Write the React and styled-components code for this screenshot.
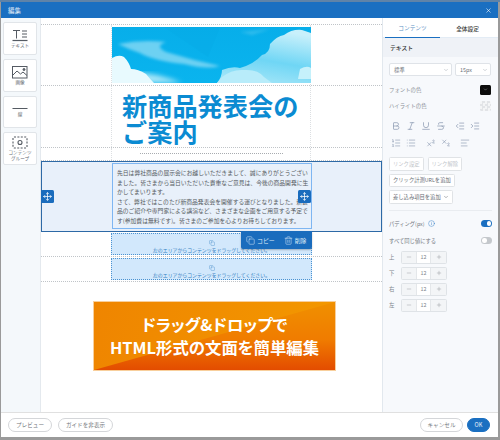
import React from "react";
import styled, { createGlobalStyle } from "styled-components";
import { X, ChevronDown, Bold, Italic, Underline, Strikethrough, Outdent, Indent, List, ListOrdered, Superscript, Subscript, AlignLeft, Copy, Trash2, Move, Minus, Plus, Info } from "lucide-react";

const Global = createGlobalStyle`
  html, body { margin: 0; padding: 0; width: 500px; height: 440px; overflow: hidden; background: #8f989f; }
  * { box-sizing: border-box; }
  #root { width: 500px; height: 440px; font-family: "Noto Sans CJK JP", "Noto Sans", sans-serif; }
`;

const Page = styled.div`
  width: 500px; height: 440px; padding: 2px 2px 3px 1px;
  background: linear-gradient(#5f83a8 0, #5f83a8 2px, #9a9a9a 2px);
`;
const Modal = styled.div`
  width: 497px; height: 435px; background: #fff; display: flex; flex-direction: column;
`;
const Header = styled.header`
  height: 16px; flex: none; background: #1a6fc1; color: #e4eef8; display: flex; align-items: center;
  justify-content: space-between; padding: 0 6px 0 7px; font-size: 6.4px;
`;
const Body = styled.div`flex: 1; min-height: 0; display: flex;`;
const Sidebar = styled.aside`
  width: 40px; flex: none; background: #f4f8fb; border-right: 1px solid #e4e9ee;
  padding: 4px 3px 0 2px; display: flex; flex-direction: column; gap: 4px;
`;
const Tool = styled.div`
  height: ${p => p.$h}px; background: #fff; border: 1px solid #e1e5e9; border-radius: 2px;
  display: flex; flex-direction: column; align-items: center; justify-content: center; gap: 1px;
  color: #666c74; font-size: 4.6px; line-height: 5.4px; text-align: center;
  svg { display: block; }
`;
const Canvas = styled.main`
  flex: 1; min-width: 0; position: relative; padding-top: 6px; background: #fff;
`;
const Row = styled.div`
  display: grid; grid-template-columns: 70px 200px 1fr;
  height: ${p => p.$h}px;
  border-top: ${p => (p.$top ? "1px dotted #c0c4c8" : "none")};
  border-bottom: 1px dotted #c0c4c8;
`;
const Side = styled.div``;
const Cell = styled.div`
  border-left: 1px dotted #dcdfe2; border-right: 1px dotted #dcdfe2; min-width: 0;
`;
const HeroCell = styled(Cell)`padding: 2px 0 2px 0;`;
const Title = styled.h1`
  margin: 0; padding: 6px 0 0 10px; font-size: 25.2px; line-height: 26px; font-weight: 700; color: #0b8bd2;
  letter-spacing: 0; white-space: nowrap;
`;
const RuleCell = styled(Cell)`display: flex; align-items: center; justify-content: center; padding: 0 0 2px 0;`;
const DotRule = styled.div`width: 143px; border-top: 1.5px dotted #a8acb0;`;
const SelectedRow = styled.div`
  position: relative; height: 71px; background: #e8f0fa; border: 1px solid #2d69a6;
  display: grid; grid-template-columns: 70px 200px 1fr; padding-top: 1px;
`;
const TextBox = styled.div`
  height: 66px; border: 1px solid #7eb6f2; padding: 4px 0 0 4px; overflow: hidden;
  font-size: 5.8px; line-height: 9.6px; color: #555a60; white-space: nowrap;
`;
const Handle = styled.div`
  position: absolute; top: 28px; left: ${p => p.$x}px; width: 13px; height: 13px; background: #1a6cbd;
  border-radius: 1.5px; display: flex; align-items: center; justify-content: center; color: #fff; z-index: 3;
`;
const Actions = styled.div`
  position: absolute; left: 199px; top: 69px; width: 71px; height: 18px; background: #1a6cbd; color: #dbe9f7;
  border-radius: 0 0 2px 2px; display: flex; align-items: center; padding-left: 5px; font-size: 5.9px; z-index: 4;
  box-shadow: 0 1px 2px rgba(0,0,0,.25);
`;
const ActionItem = styled.span`display: inline-flex; align-items: center; gap: 2px; margin-right: ${p => p.$mr || 0}px;`;
const ZoneRow = styled.div`
  display: grid; grid-template-columns: 70px 201px 1fr; height: 25px; border-bottom: 1px dotted #c0c4c8; padding-top: 1px;
`;
const Zone = styled.div`
  height: 22px; background: #d2e8fc; border: 1px dotted #4b93d2; color: #3481c3; font-size: 4.9px; line-height: 6px;
  display: flex; flex-direction: column; align-items: center; justify-content: flex-end; padding-bottom: 1px; gap: 1px; white-space: nowrap;
`;
const Banner = styled.div`
  position: relative; width: 243px; height: 70px; margin: 19px 0 0 52px; overflow: hidden;
  background: linear-gradient(100deg, #ef8500 0%, #f39800 100%); border: 1px solid #f8cf9c;
  color: #fff; display: flex; flex-direction: column; align-items: center; justify-content: center;
  font-size: 16.4px; line-height: 23px; font-weight: 700; font-feature-settings: "palt";
`;
const Wedge = styled.div`
  position: absolute; inset: 0; background: linear-gradient(#f09000 0%, #f07c00 55%, #e34c00 100%);
  clip-path: polygon(0 100%, 100% 0, 100% 100%);
`;
const BannerLine = styled.span`position: relative; white-space: nowrap;`;

const Panel = styled.aside`
  width: 116px; flex: none; background: #f7f9fc; border-left: 1px solid #e2e8ee; display: flex; flex-direction: column;
`;
const Tabs = styled.div`display: flex; height: 20px; padding: 0 3px 0 2px; background: #fff; border-bottom: 1px solid #e3ecf5;`;
const Tab = styled.div`
  flex: 1; display: flex; align-items: center; justify-content: center; font-size: 5.7px; height: 20px;
  color: ${p => (p.$active ? "#5c8fc4" : "#444")}; font-weight: ${p => (p.$active ? 400 : 500)};
  border-bottom: ${p => (p.$active ? "1.5px solid #1a6fc1" : "none")};
`;
const SectionHead = styled.div`
  height: 19px; background: #eff2f7; font-size: 5.8px; font-weight: 500; color: #333; display: flex; align-items: center; padding-left: 7px;
`;
const PanelBody = styled.div`padding: 6px 6px 0 6px; display: flex; flex-direction: column;`;
const Selects = styled.div`display: flex; gap: 3px;`;
const Select = styled.div`
  width: ${p => p.$w}px; height: 13px; background: #fff; border: 1px solid #dfe3e8; border-radius: 2px; color: #6a7078; font-size: 5.4px;
  display: flex; align-items: center; justify-content: space-between; padding: 0 2px 0 4px;
`;
const ColorRow = styled.div`
  display: flex; align-items: center; justify-content: space-between; height: 11px; margin-top: ${p => p.$mt}px; padding-right: 1px;
  font-size: 5.4px; color: #8b9097;
`;
const Swatch = styled.div`
  width: 11px; height: 10px; border-radius: 1.5px; background: #0c0c0c; color: #bbb; display: flex; align-items: center; justify-content: center;
`;
const EmptySwatch = styled.div`
  width: 11px; height: 10px; border-radius: 1.5px;
  background: repeating-conic-gradient(#e2e4e7 0 25%, #f4f5f6 0 50%) 0 0 / 5px 5px;
`;
const IconLine = styled.div`display: flex; align-items: center; height: 10px; margin-top: ${p => p.$mt}px; padding-left: 2px; color: #8291ab; svg { display: block; flex: none; }`;
const IconSlot = styled.span`width: ${p => p.$w || 15}px; display: flex;`;
const ButtonLine = styled.div`display: flex; gap: 4px; margin-top: ${p => p.$mt}px;`;
const SmallBtn = styled.div`
  height: 13.5px; padding: 0 3px; background: #fff; border: 1px solid #e0e3e6; border-radius: 1.5px; font-size: 5.3px; white-space: nowrap;
  color: ${p => (p.$off ? "#c0c4c9" : "#666c74")}; display: flex; align-items: center; gap: 2px;
`;
const Divider = styled.div`border-top: 1px solid #e9ecf0; margin: 6px 0 0 0;`;
const SwitchRow = styled.div`
  display: flex; align-items: center; justify-content: space-between; height: 8px; margin-top: ${p => p.$mt}px; font-size: 5.3px; color: #70767d;
`;
const SwitchLabel = styled.span`display: inline-flex; align-items: center; gap: 3px; color: #1a6fc1; > em { color: #70767d; font-style: normal; }`;
const Toggle = styled.span`
  width: 11px; height: 6.5px; border-radius: 4px; background: ${p => (p.$on ? "#1a6fc1" : "#c4c8cc")}; position: relative; display: block;
  &::after { content: ""; position: absolute; top: 1px; ${p => (p.$on ? "right: 1px" : "left: 1px")}; width: 4.5px; height: 4.5px; border-radius: 50%; background: #fff; }
`;
const StepRow = styled.div`display: flex; align-items: center; height: 13px; margin-top: ${p => p.$mt}px; font-size: 5.4px; color: #80868c;`;
const StepLabel = styled.span`width: 12px;`;
const Stepper = styled.div`
  width: 46px; height: 13px; display: grid; grid-template-columns: 14px 1fr 15px; border: 1px solid #dfe3e7; border-radius: 1.5px; background: #f3f5f7;
`;
const StepBtn = styled.span`display: flex; align-items: center; justify-content: center; color: #70767d;`;
const StepVal = styled.span`background: #fff; display: flex; align-items: center; justify-content: center; color: #83888e; border: solid #e4e7ea; border-width: 0 1px;`;

const Footer = styled.footer`
  height: 25px; flex: none; border-top: 1px solid #e0e0e0; background: #fff; display: flex; align-items: center; justify-content: space-between; padding: 0 8px 0 7px;
`;
const FootGroup = styled.div`display: flex; gap: ${p => p.$gap}px;`;
const Pill = styled.div`
  height: 13.5px; width: ${p => p.$w}px; border-radius: 7px; border: 1px solid ${p => (p.$primary ? "#1a6fc1" : "#d4d6d9")};
  background: ${p => (p.$primary ? "#1a6fc1" : "#fff")}; color: ${p => (p.$primary ? "#e8f1fa" : "#75797e")}; font-size: 5.6px;
  display: flex; align-items: center; justify-content: center;
`;

const Hero = () => (
  <svg width="199" height="56" viewBox="0 0 199 56" style={{ display: "block" }}>
    <defs>
      <linearGradient id="sky" x1="0" y1="0" x2="0" y2="1">
        <stop offset="0" stopColor="#07aeea" /><stop offset="1" stopColor="#0ab4ee" />
      </linearGradient>
      <filter id="b1"><feGaussianBlur stdDeviation="1.5" /></filter>
      <filter id="b2"><feGaussianBlur stdDeviation="0.6" /></filter>
      <filter id="b3"><feGaussianBlur stdDeviation="2.5" /></filter>
      <linearGradient id="cl" x1="0.6" y1="0" x2="0.3" y2="1">
        <stop offset="0" stopColor="#c8f0fb" /><stop offset=".55" stopColor="#6fd6f5" /><stop offset="1" stopColor="#a6e6f8" />
      </linearGradient>
    </defs>
    <rect width="199" height="56" fill="url(#sky)" />
    <path d="M52 0 L108 0 L96 30 Z" fill="#05a8e4" opacity=".35" />
    <g filter="url(#b1)" fill="#8fdcf5" opacity=".75">
      <path d="M6 17 Q30 12 54 15 Q42 19 54 25 Q80 33 108 39 Q95 43 72 37 Q42 34 28 26 Q16 22 6 17Z" />
      <path d="M128 5 L158 2 L140 8Z" opacity=".4" />
    </g>
    <g filter="url(#b3)">
      <path d="M18 46 Q40 44 70 56 L18 56Z" fill="#a8e6f8" />
    </g>
    <g filter="url(#b2)">
      <path d="M0 31 Q7 27 12 30 Q17 35 19 42 Q26 42 34 47 Q38 52 42 56 L0 56Z" fill="#e8fafe" />
      <path d="M105 56 Q110 50 110 43 Q120 39 128 41 Q142 37 150 28 Q158 26 158 17 Q165 9 172 8 Q180 2 190 3 L199 6 L199 56Z" fill="url(#cl)" />
      <path d="M110 50 Q120 42 132 43 Q146 42 152 50 L160 56 L105 56Z" fill="#b8ecfa" />
      <path d="M188 42 Q195 38 199 41 L199 52 L186 52Z" fill="#c6f1fb" />
    </g>
  </svg>
);

const TextIcon = () => (
  <svg width="16" height="13" viewBox="0 0 16 13" fill="none" stroke="#555b63" strokeWidth="1">
    <path d="M1 1.5H8M4.5 1.5V9.5M10 2H15M10 5H15M10 8H15" />
    <path d="M.5 11.5H15.5" strokeWidth="1.2" />
  </svg>
);
const ImageIcon = () => (
  <svg width="16" height="13" viewBox="0 0 16 13" fill="none" stroke="#555b63" strokeWidth="1">
    <rect x=".5" y=".5" width="14.5" height="11.5" />
    <path d="M1 9L5 5L8.5 8L11 6L15 9.5" />
    <circle cx="12" cy="3.5" r="1" fill="#555b63" />
  </svg>
);
const LineIcon = () => (
  <svg width="16" height="5" viewBox="0 0 16 5"><path d="M.5 2.5H15.5" stroke="#555b63" strokeWidth="1" /></svg>
);
const GroupIcon = () => (
  <svg width="16" height="13" viewBox="0 0 16 13" fill="none">
    <rect x="1" y="1" width="14" height="11" rx="1" stroke="#555b63" strokeWidth="1.1" strokeDasharray="2 1.4" />
    <circle cx="8" cy="6.5" r="2" stroke="#555b63" strokeWidth="1.1" />
  </svg>
);
const ZoneIcon = () => <Copy size={6} strokeWidth={1.6} color="#4b8fc9" />;

const Steps = ["上", "下", "右", "左"];
const Stepr = ({ label, mt }) => (
  <StepRow $mt={mt}>
    <StepLabel>{label}</StepLabel>
    <Stepper>
      <StepBtn><Minus size={6} strokeWidth={1.3} /></StepBtn>
      <StepVal>12</StepVal>
      <StepBtn><Plus size={6} strokeWidth={1.3} /></StepBtn>
    </Stepper>
  </StepRow>
);

export default function App() {
  return (
    <>
      <Global />
      <Page>
        <Modal>
          <Header>
            <span>編集</span>
            <X size={7} strokeWidth={2} color="#fff" />
          </Header>
          <Body>
            <Sidebar>
              <Tool $h={33}><TextIcon /><span>テキスト</span></Tool>
              <Tool $h={33}><ImageIcon /><span>画像</span></Tool>
              <Tool $h={32}><LineIcon /><span>線</span></Tool>
              <Tool $h={33}><GroupIcon /><span>コンテンツ<br />グループ</span></Tool>
            </Sidebar>
            <Canvas>
              <Row $h={62} $top>
                <Side />
                <HeroCell><Hero /></HeroCell>
                <Side />
              </Row>
              <Row $h={62}>
                <Side />
                <Cell><Title>新商品発表会の<br />ご案内</Title></Cell>
                <Side />
              </Row>
              <Row $h={13}>
                <Side />
                <RuleCell><DotRule /></RuleCell>
                <Side />
              </Row>
              <SelectedRow>
                <Side />
                <TextBox>
                  先日は弊社商品の展示会にお越しいただきまして、誠にありがとうござい<br />
                  ました。皆さまから当日いただいた貴重なご意見は、今後の商品開発に生<br />
                  かしてまいります。<br />
                  さて、弊社ではこのたび新商品発表会を開催する運びとなりました。新製<br />
                  品のご紹介や専門家による講演など、さまざまな企画をご用意する予定で<br />
                  す(参加費は無料です)。皆さまのご参加を心よりお待ちしております。
                </TextBox>
                <Side />
                <Handle $x={-1}><Move size={9} strokeWidth={2} /></Handle>
                <Handle $x={256}><Move size={9} strokeWidth={2} /></Handle>
                <Actions>
                  <ActionItem $mr={9}><Copy size={9} strokeWidth={1.4} />コピー</ActionItem>
                  <ActionItem><Trash2 size={9} strokeWidth={1.4} />削除</ActionItem>
                </Actions>
              </SelectedRow>
              <ZoneRow>
                <Side />
                <Zone><ZoneIcon /><span>左のエリアからコンテンツをドラッグしてください。</span></Zone>
                <Side />
              </ZoneRow>
              <ZoneRow>
                <Side />
                <Zone><ZoneIcon /><span>左のエリアからコンテンツをドラッグしてください。</span></Zone>
                <Side />
              </ZoneRow>
              <Banner>
                <Wedge />
                <BannerLine>ドラッグ&amp;ドロップで</BannerLine>
                <BannerLine>HTML形式の文面を簡単編集</BannerLine>
              </Banner>
            </Canvas>
            <Panel>
              <Tabs>
                <Tab $active>コンテンツ</Tab>
                <Tab>全体設定</Tab>
              </Tabs>
              <SectionHead>テキスト</SectionHead>
              <PanelBody>
                <Selects>
                  <Select $w={63}>標準<ChevronDown size={6} color="#a5abb2" /></Select>
                  <Select $w={36}>15px<ChevronDown size={6} color="#a5abb2" /></Select>
                </Selects>
                <ColorRow $mt={8}>フォントの色<Swatch><ChevronDown size={5} /></Swatch></ColorRow>
                <ColorRow $mt={5}>ハイライトの色<EmptySwatch /></ColorRow>
                <IconLine $mt={10}>
                  <IconSlot><Bold size={10} strokeWidth={1.6} /></IconSlot>
                  <IconSlot><Italic size={10} strokeWidth={1.6} /></IconSlot>
                  <IconSlot><Underline size={10} strokeWidth={1.6} /></IconSlot>
                  <IconSlot $w={19}><Strikethrough size={10} strokeWidth={1.6} /></IconSlot>
                  <IconSlot><Outdent size={10} strokeWidth={1.6} /></IconSlot>
                  <IconSlot><Indent size={10} strokeWidth={1.6} /></IconSlot>
                </IconLine>
                <IconLine $mt={7}>
                  <IconSlot><ListOrdered size={10} strokeWidth={1.4} /></IconSlot>
                  <IconSlot $w={20}><List size={10} strokeWidth={1.4} /></IconSlot>
                  <IconSlot><Superscript size={10} strokeWidth={1.4} /></IconSlot>
                  <IconSlot $w={19}><Subscript size={10} strokeWidth={1.4} /></IconSlot>
                  <IconSlot><AlignLeft size={10} strokeWidth={1.4} /></IconSlot>
                </IconLine>
                <ButtonLine $mt={9}>
                  <SmallBtn $off>リンク設定</SmallBtn>
                  <SmallBtn $off>リンク解除</SmallBtn>
                </ButtonLine>
                <ButtonLine $mt={3}><SmallBtn>クリック計測URLを追加</SmallBtn></ButtonLine>
                <ButtonLine $mt={3}><SmallBtn>差し込み項目を追加 <ChevronDown size={6} /></SmallBtn></ButtonLine>
                <Divider />
                <SwitchRow $mt={9}>
                  <SwitchLabel><em>パディング(px)</em><Info size={7} strokeWidth={1.4} /></SwitchLabel>
                  <Toggle $on />
                </SwitchRow>
                <SwitchRow $mt={9}>
                  <span>すべて同じ値にする</span>
                  <Toggle />
                </SwitchRow>
                {Steps.map((s, i) => <Stepr key={s} label={s} mt={i === 0 ? 6 : 3} />)}
              </PanelBody>
            </Panel>
          </Body>
          <Footer>
            <FootGroup $gap={6}>
              <Pill $w={44}>プレビュー</Pill>
              <Pill $w={55}>ガイドを非表示</Pill>
            </FootGroup>
            <FootGroup $gap={4}>
              <Pill $w={43}>キャンセル</Pill>
              <Pill $w={23} $primary>OK</Pill>
            </FootGroup>
          </Footer>
        </Modal>
      </Page>
    </>
  );
}
